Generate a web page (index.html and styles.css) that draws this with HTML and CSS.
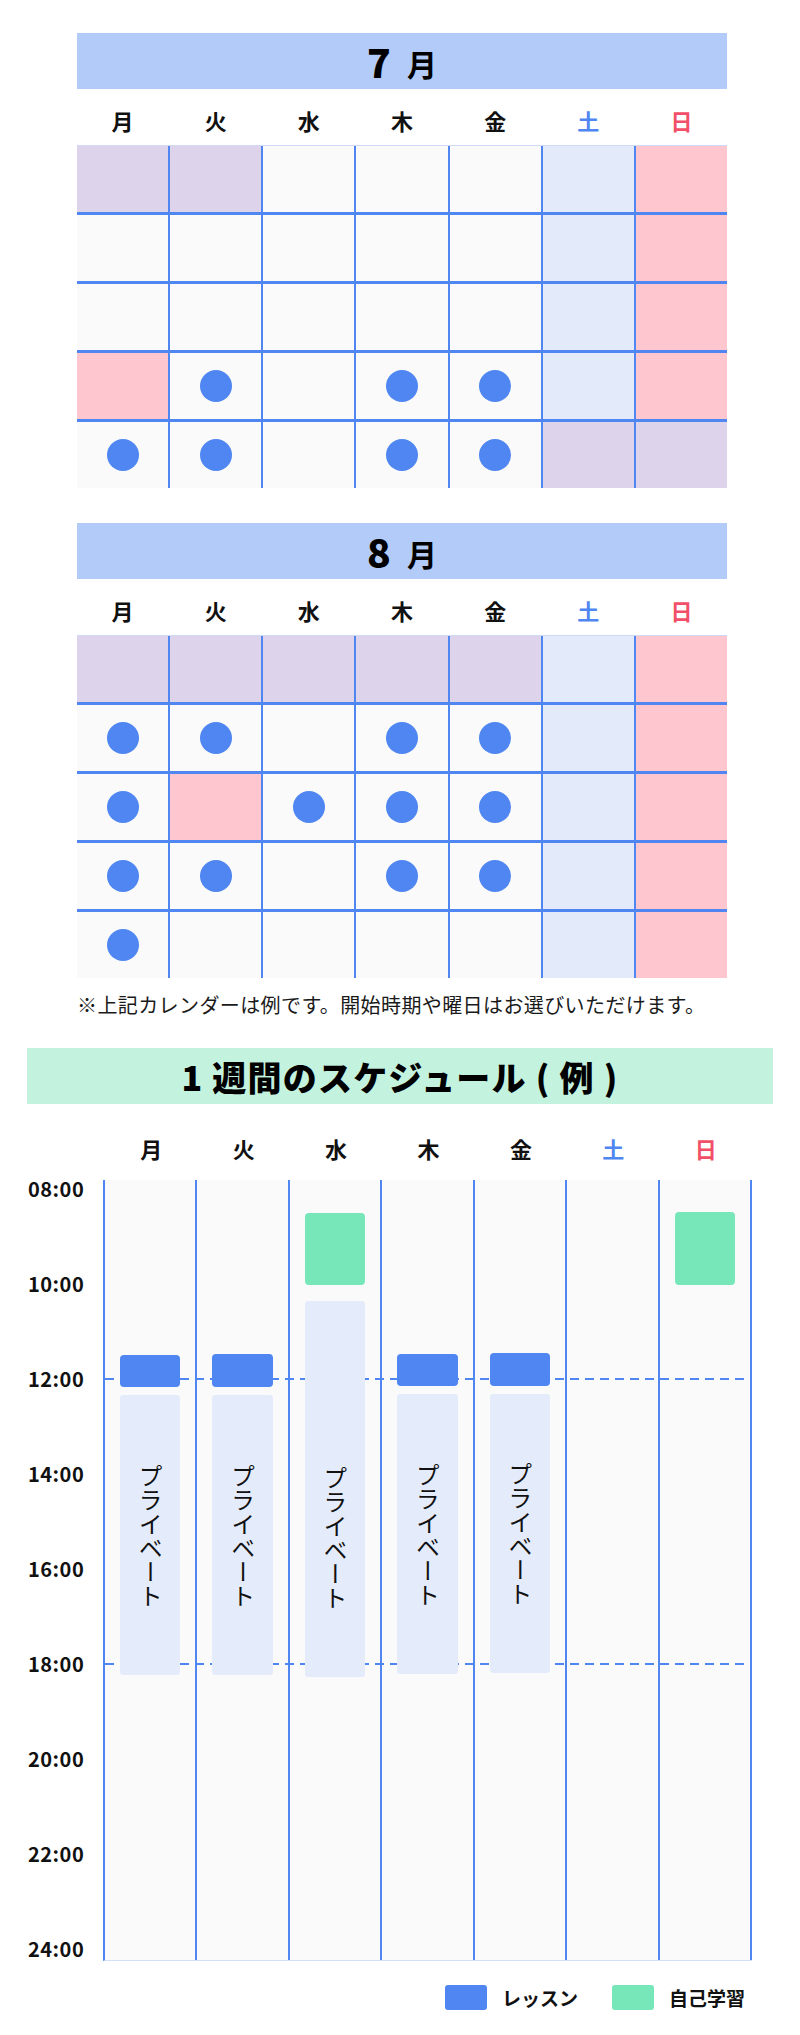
FILE: index.html
```html
<!DOCTYPE html>
<html lang="ja">
<head>
<meta charset="utf-8">
<title>スケジュール</title>
<link rel="stylesheet" href="styles.css">
</head>
<body>
<main class="page">
  <section class="cal cal-first">
    <h2 class="cal-title"><span class="num">7</span><span class="mon">月</span></h2>
    <div class="dow">
      <span>月</span><span>火</span><span>水</span><span>木</span><span>金</span><span class="sat-t">土</span><span class="sun-t">日</span>
    </div>
    <div class="grid">
      <div class="c lav"></div><div class="c lav"></div><div class="c"></div><div class="c"></div><div class="c"></div><div class="c sat"></div><div class="c sun"></div>
      <div class="c"></div><div class="c"></div><div class="c"></div><div class="c"></div><div class="c"></div><div class="c sat"></div><div class="c sun"></div>
      <div class="c"></div><div class="c"></div><div class="c"></div><div class="c"></div><div class="c"></div><div class="c sat"></div><div class="c sun"></div>
      <div class="c sun"></div><div class="c"><i class="dot"></i></div><div class="c"></div><div class="c"><i class="dot"></i></div><div class="c"><i class="dot"></i></div><div class="c sat"></div><div class="c sun"></div>
      <div class="c"><i class="dot"></i></div><div class="c"><i class="dot"></i></div><div class="c"></div><div class="c"><i class="dot"></i></div><div class="c"><i class="dot"></i></div><div class="c lav"></div><div class="c lav"></div>
    </div>
  </section>

  <section class="cal cal-second">
    <h2 class="cal-title"><span class="num">8</span><span class="mon">月</span></h2>
    <div class="dow">
      <span>月</span><span>火</span><span>水</span><span>木</span><span>金</span><span class="sat-t">土</span><span class="sun-t">日</span>
    </div>
    <div class="grid">
      <div class="c lav"></div><div class="c lav"></div><div class="c lav"></div><div class="c lav"></div><div class="c lav"></div><div class="c sat"></div><div class="c sun"></div>
      <div class="c"><i class="dot"></i></div><div class="c"><i class="dot"></i></div><div class="c"></div><div class="c"><i class="dot"></i></div><div class="c"><i class="dot"></i></div><div class="c sat"></div><div class="c sun"></div>
      <div class="c"><i class="dot"></i></div><div class="c sun"></div><div class="c"><i class="dot"></i></div><div class="c"><i class="dot"></i></div><div class="c"><i class="dot"></i></div><div class="c sat"></div><div class="c sun"></div>
      <div class="c"><i class="dot"></i></div><div class="c"><i class="dot"></i></div><div class="c"></div><div class="c"><i class="dot"></i></div><div class="c"><i class="dot"></i></div><div class="c sat"></div><div class="c sun"></div>
      <div class="c"><i class="dot"></i></div><div class="c"></div><div class="c"></div><div class="c"></div><div class="c"></div><div class="c sat"></div><div class="c sun"></div>
    </div>
    <p class="note">※上記カレンダーは例です。開始時期や曜日はお選びいただけます。</p>
  </section>

  <section class="sched">
    <h2 class="sched-title">1 週間のスケジュール ( 例 )</h2>
    <div class="sched-dow">
      <span>月</span><span>火</span><span>水</span><span>木</span><span>金</span><span class="sat-t">土</span><span class="sun-t">日</span>
    </div>
    <div class="sched-body">
      <div class="times">
        <span class="time">08:00</span>
        <span class="time">10:00</span>
        <span class="time">12:00</span>
        <span class="time">14:00</span>
        <span class="time">16:00</span>
        <span class="time">18:00</span>
        <span class="time">20:00</span>
        <span class="time">22:00</span>
        <span class="time">24:00</span>
      </div>
      <div class="tgrid">
        <div class="col">
          <div class="ev lesson" style="top:175px;height:32px"></div>
          <div class="ev private" style="top:215px;height:280px"><span class="private-text">プライベート</span></div>
        </div>
        <div class="col">
          <div class="ev lesson" style="top:174px;height:33px"></div>
          <div class="ev private" style="top:215px;height:280px"><span class="private-text">プライベート</span></div>
        </div>
        <div class="col">
          <div class="ev study" style="top:33px;height:72px"></div>
          <div class="ev private" style="top:121px;height:376px"><span class="private-text">プライベート</span></div>
        </div>
        <div class="col">
          <div class="ev lesson" style="top:174px;height:32px"></div>
          <div class="ev private" style="top:214px;height:280px"><span class="private-text">プライベート</span></div>
        </div>
        <div class="col">
          <div class="ev lesson" style="top:173px;height:33px"></div>
          <div class="ev private" style="top:214px;height:279px"><span class="private-text">プライベート</span></div>
        </div>
        <div class="col"></div>
        <div class="col">
          <div class="ev study" style="top:32px;height:73px"></div>
        </div>
        <div class="dash" style="top:198px"></div>
        <div class="dash" style="top:483px"></div>
      </div>
    </div>
    <div class="legend">
      <span class="key key-lesson"></span><span class="key-label">レッスン</span>
      <span class="key key-study"></span><span class="key-label">自己学習</span>
    </div>
  </section>
</main>
</body>
</html>
```

FILE: styles.css
```css
* {
  box-sizing: border-box;
}

body {
  margin: 0;
  background: #ffffff;
  color: #111111;
  font-family: "Noto Sans CJK JP", "Noto Sans", sans-serif;
}

.page {
  width: 800px;
  padding-top: 33px;
  padding-bottom: 25px;
}

/* ---------- month calendars ---------- */
.cal {
  width: 650px;
  margin-left: 77px;
}

.cal-second {
  margin-top: 35px;
}

.cal-title {
  margin: 0;
  height: 56px;
  background: #b2cbf8;
  display: flex;
  justify-content: center;
  align-items: center;
  gap: 16px;
  color: #000000;
}

.cal-title .num {
  font-size: 39px;
  font-weight: 900;
  line-height: 40px;
}

.cal-title .mon {
  font-size: 30px;
  font-weight: 700;
  line-height: 40px;
  padding-top: 4px;
}

.dow {
  display: grid;
  grid-template-columns: repeat(7, 1fr);
  column-gap: 2px;
  height: 56px;
  padding-top: 5px;
  align-items: center;
  text-align: center;
  font-size: 22px;
  font-weight: 700;
  line-height: 24px;
}

.sat-t {
  color: #4f86f1;
}

.sun-t {
  color: #f24f68;
}

.grid {
  display: grid;
  grid-template-columns: repeat(7, 1fr);
  grid-template-rows: repeat(5, 66px);
  column-gap: 2px;
  row-gap: 3px;
  background: #4f86f1;
  border-top: 1px solid #cdd9f6;
}

.c {
  background: #fafafa;
  display: flex;
  align-items: center;
  justify-content: center;
}

.c.lav {
  background: #ddd4ec;
}

.c.sat {
  background: #e3ebfb;
}

.c.sun {
  background: #fec7cf;
}

.dot {
  width: 32px;
  height: 32px;
  border-radius: 50%;
  background: #4f86f1;
}

.note {
  margin: 15px 0 0;
  font-size: 20px;
  line-height: 24px;
  font-weight: 400;
  letter-spacing: 0.4px;
  color: #1a1a1a;
  white-space: nowrap;
}

/* ---------- weekly schedule ---------- */
.sched {
  width: 746px;
  margin-left: 27px;
  margin-top: 31px;
}

.sched-title {
  margin: 0;
  height: 56px;
  background: #c3f2de;
  display: flex;
  justify-content: center;
  align-items: center;
  font-size: 34px;
  font-weight: 900;
  letter-spacing: 1.2px;
  color: #000000;
}

.sched-dow {
  display: grid;
  grid-template-columns: repeat(7, 1fr);
  width: 725px;
  padding-left: 78px;
  height: 76px;
  padding-top: 30px;
  text-align: center;
  font-size: 22px;
  font-weight: 700;
  line-height: 28px;
}

.sched-body {
  display: flex;
}

.times {
  width: 76px;
  display: flex;
  flex-direction: column;
  gap: 75px;
  margin-top: -1px;
}

.time {
  height: 20px;
  line-height: 20px;
  font-size: 20px;
  font-weight: 700;
  letter-spacing: 0.5px;
  padding-left: 1px;
  color: #111111;
}

.tgrid {
  position: relative;
  width: 649px;
  height: 781px;
  display: grid;
  grid-template-columns: repeat(7, 1fr);
  border-left: 2px solid #4f86f1;
  border-bottom: 1px solid #d4e0fa;
}

.col {
  position: relative;
  background: #fafafa;
  border-right: 2px solid #4f86f1;
}

.ev {
  position: absolute;
  left: 15px;
  right: 15px;
  border-radius: 4px;
  z-index: 2;
}

.lesson {
  background: #4f86f1;
}

.study {
  background: #77e6b9;
}

.private {
  background: #e4ecfb;
  border-radius: 3px;
  display: flex;
  flex-direction: column;
  align-items: center;
  justify-content: flex-end;
  padding-bottom: 67px;
}

.private-text {
  writing-mode: vertical-rl;
  font-size: 24px;
  line-height: 24px;
  font-weight: 400;
  color: #111111;
}

.dash {
  position: absolute;
  left: 0;
  right: 0;
  height: 2px;
  background: repeating-linear-gradient(90deg, #4f86f1 0 9px, transparent 9px 15px);
  z-index: 1;
}

.legend {
  display: flex;
  justify-content: flex-end;
  align-items: center;
  margin-top: 24px;
  padding-right: 28px;
  height: 25px;
}

.key {
  width: 42px;
  height: 25px;
  border-radius: 3px;
  margin-right: 15px;
}

.key-lesson {
  background: #4f86f1;
}

.key-study {
  background: #77e6b9;
  margin-left: 34px;
}

.key-label {
  font-size: 19px;
  line-height: 25px;
  font-weight: 700;
  color: #111111;
}
```
